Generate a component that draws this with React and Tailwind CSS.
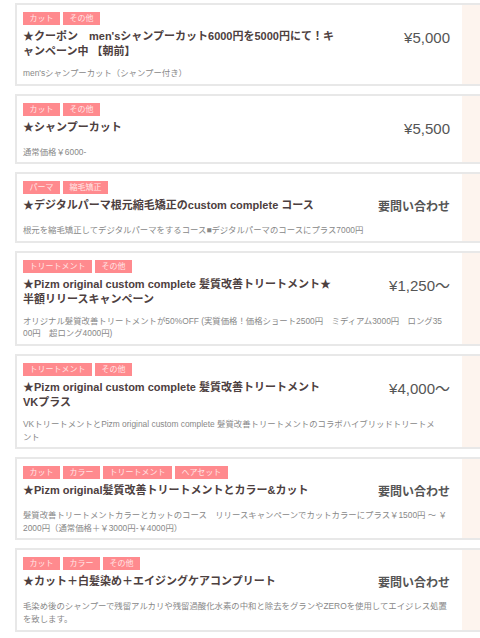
import React from 'react';

const menus = [
    {
        tags: ['カット', 'その他'],
        title: '★クーポン　men\'sシャンプーカット6000円を5000円にて！キ\nャンペーン中 【朝前】',
        price: '¥5,000',
        description: 'men\'sシャンプーカット（シャンプー付き）'
    },
    {
        tags: ['カット', 'その他'],
        title: '★シャンプーカット',
        price: '¥5,500',
        description: '通常価格￥6000-'
    },
    {
        tags: ['パーマ', '縮毛矯正'],
        title: '★デジタルパーマ根元縮毛矯正のcustom complete コース',
        price: '要問い合わせ',
        description: '根元を縮毛矯正してデジタルパーマをするコース■デジタルパーマのコースにプラス7000円'
    },
    {
        tags: ['トリートメント', 'その他'],
        title: '★Pizm original custom complete 髪質改善トリートメント★\n半額リリースキャンペーン',
        price: '¥1,250〜',
        description: 'オリジナル髪質改善トリートメントが50%OFF (実質価格！価格ショート2500円　ミディアム3000円　ロング35\n00円　超ロング4000円)'
    },
    {
        tags: ['トリートメント', 'その他'],
        title: '★Pizm original custom complete 髪質改善トリートメント\nVKプラス',
        price: '¥4,000〜',
        description: 'VKトリートメントとPizm original custom complete 髪質改善トリートメントのコラボハイブリッドトリートメ\nント'
    },
    {
        tags: ['カット', 'カラー', 'トリートメント', 'ヘアセット'],
        title: '★Pizm original髪質改善トリートメントとカラー&カット',
        price: '要問い合わせ',
        description: '髪質改善トリートメントカラーとカットのコース　リリースキャンペーンでカットカラーにプラス￥1500円 〜 ￥\n2000円（通常価格＋￥3000円-￥4000円）'
    },
    {
        tags: ['カット', 'カラー', 'その他'],
        title: '★カット＋白髪染め＋エイジングケアコンプリート',
        price: '要問い合わせ',
        description: '毛染め後のシャンプーで残留アルカリや残留過酸化水素の中和と除去をグランやZEROを使用してエイジレス処置\nを致します。'
    }
];

const MenuCard = ({ menu }) => {
    const inquiry = menu.price === '要問い合わせ';
    return (
        <div className="flex w-[600px] border-2 border-[#e8e8e8] bg-white mb-2">
            <div className="w-[445px] shrink-0 pl-[6px] pr-[8px] pt-[7px] pb-[4px]">
                <div className="flex gap-[3px]">
                    {menu.tags.map(tag => (
                        <span
                            key={tag}
                            className="h-[13px] px-[6.5px] bg-[#ff8a8e] text-[#ffe6e6] text-[8px] leading-[13px]"
                        >
                            {tag}
                        </span>
                    ))}
                </div>
                <div className="flex items-start mt-[4px] pr-[4px]">
                    <h3 className="flex-1 whitespace-pre-line text-[11px] leading-[15px] font-bold text-[#4d4040]">
                        {menu.title}
                    </h3>
                    <p
                        className={
                            inquiry
                                ? 'w-[110px] text-right text-[12px] leading-[18px] font-bold text-[#555]'
                                : 'w-[110px] text-right text-[15px] leading-[18px] text-[#555]'
                        }
                    >
                        {menu.price}
                    </p>
                </div>
                <p className="mt-2 whitespace-pre-line text-[8.4px] leading-[12.6px] text-[#888]">
                    {menu.description}
                </p>
            </div>
            <div className="flex-1 bg-[#fdf4ee]"></div>
        </div>
    );
};

const App = () => {
    return (
        <div
            className="w-[480px] h-[638px] overflow-hidden bg-white pl-[15px] pt-[3px]"
            style={{ fontFamily: '"Liberation Sans", "Noto Sans CJK JP", sans-serif' }}
        >
            {menus.map((menu, i) => (
                <MenuCard key={i} menu={menu} />
            ))}
        </div>
    );
};

export default App;
